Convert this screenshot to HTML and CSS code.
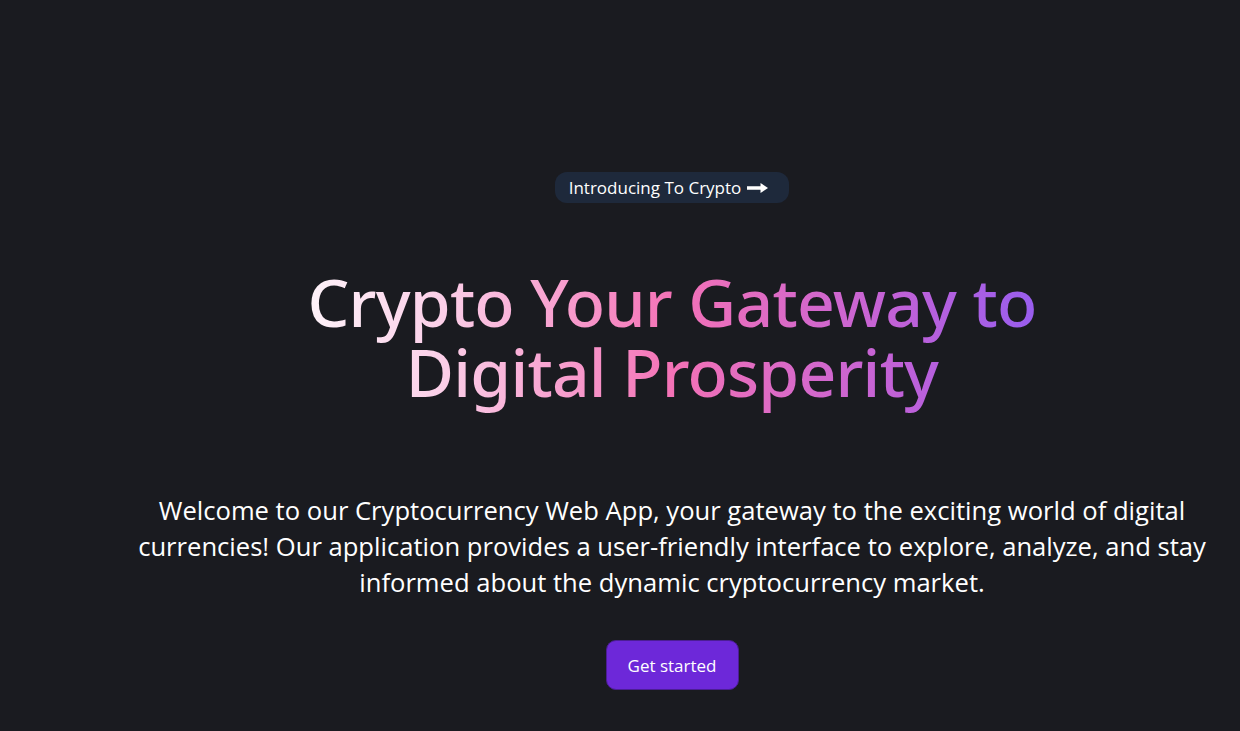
FILE: index.html
```html
<!DOCTYPE html>
<html lang="en">
<head>
<meta charset="utf-8">
<title>Crypto</title>
<link rel="stylesheet" href="styles.css">
</head>
<body>
<main class="hero">
  <a class="pill" href="#">Introducing To Crypto
    <svg class="arrow" width="21" height="12" viewBox="0 0 21 12"><path d="M0 4.3h13.5V1L21 6l-7.5 5V7.7H0z" fill="#fff"/></svg>
  </a>
  <h1 class="title">Crypto Your Gateway to Digital Prosperity</h1>
  <p class="lead">Welcome to our Cryptocurrency Web App, your gateway to the exciting world of digital currencies! Our application provides a user-friendly interface to explore, analyze, and stay informed about the dynamic cryptocurrency market.</p>
  <button class="cta" type="button">Get started</button>
</main>
</body>
</html>
```
FILE: styles.css
```css
html, body {
  margin: 0;
  background: #1a1b20;
  height: 100%;
}
body {
  font-family: "Segoe UI", "Open Sans", "Noto Sans", sans-serif;
  color: #fff;
  overflow: hidden;
}
.hero {
  display: flex;
  flex-direction: column;
  align-items: center;
  padding: 172px 0 0 104px;
  text-align: center;
}
.pill {
  display: inline-flex;
  align-items: center;
  gap: 6px;
  height: 31px;
  box-sizing: border-box;
  padding: 0 21px 0 14px;
  background: #1e293b;
  border-radius: 12px;
  color: #fff;
  text-decoration: none;
  font-size: 17px;
  letter-spacing: 0;
}
.arrow { display: block; }
.title {
  margin: 63px 0 -14px;
  padding-bottom: 14px;
  max-width: 820px;
  font-family: "Noto Sans", "Open Sans", sans-serif;
  font-size: 66px;
  line-height: 70px;
  font-weight: 500;
  letter-spacing: -0.8px;
  background: linear-gradient(to right, #ffffff 0%, #fbcfe8 22%, #f472b6 50%, #c061d8 78%, #8b5cf6 100%);
  -webkit-background-clip: text;
  background-clip: text;
  color: transparent;
}
.lead {
  margin: 87px 0 0;
  max-width: 1100px;
  font-size: 25.6px;
  line-height: 36px;
  letter-spacing: 0;
}
.cta {
  margin-top: 39px;
  width: 133px;
  height: 50px;
  border: 1px solid #4c1d95;
  border-radius: 10px;
  background: #6d28d9;
  color: #fff;
  font-family: inherit;
  font-size: 17px;
  cursor: pointer;
}
```
